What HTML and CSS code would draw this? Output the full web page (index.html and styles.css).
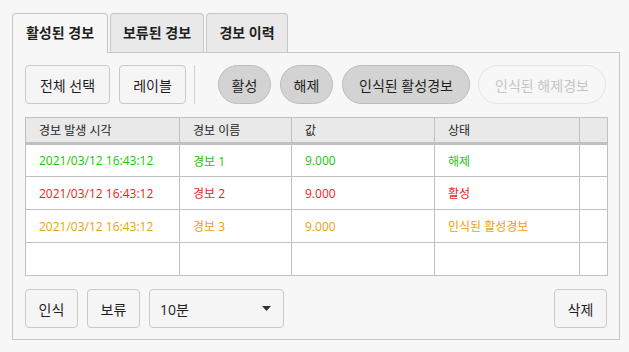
FILE: index.html
```html
<!DOCTYPE html>
<html lang="ko">
  <head>
    <meta charset="UTF-8" />
    <meta name="viewport" content="width=device-width, initial-scale=1.0" />
    <title>경보</title>
    <link rel="stylesheet" href="styles.css">
  </head>
  <body>
    <div class="tabs">
      <div class="tab tab-active">활성된 경보</div>
      <div class="tab">보류된 경보</div>
      <div class="tab">경보 이력</div>
    </div>
    <div class="panel">
      <div class="toolbar">
        <button class="btn btn-select">전체 선택</button>
        <button class="btn btn-label">레이블</button>
        <span class="separator"></span>
        <button class="pill pill-short">활성</button>
        <button class="pill pill-short">해제</button>
        <button class="pill pill-long">인식된 활성경보</button>
        <button class="pill pill-long pill-disabled">인식된 해제경보</button>
      </div>
      <table class="alarm-table">
        <colgroup>
          <col class="col-time" />
          <col class="col-name" />
          <col class="col-value" />
          <col class="col-state" />
          <col class="col-extra" />
        </colgroup>
        <thead>
          <tr>
            <th>경보 발생 시각</th>
            <th>경보 이름</th>
            <th>값</th>
            <th>상태</th>
            <th></th>
          </tr>
        </thead>
        <tbody>
          <tr class="row-cleared">
            <td>2021/03/12 16:43:12</td>
            <td>경보 1</td>
            <td>9.000</td>
            <td>해제</td>
            <td></td>
          </tr>
          <tr class="row-active">
            <td>2021/03/12 16:43:12</td>
            <td>경보 2</td>
            <td>9.000</td>
            <td>활성</td>
            <td></td>
          </tr>
          <tr class="row-acked">
            <td>2021/03/12 16:43:12</td>
            <td>경보 3</td>
            <td>9.000</td>
            <td>인식된 활성경보</td>
            <td></td>
          </tr>
          <tr>
            <td></td>
            <td></td>
            <td></td>
            <td></td>
            <td></td>
          </tr>
        </tbody>
      </table>
      <div class="footer">
        <button class="btn btn-small">인식</button>
        <button class="btn btn-small">보류</button>
        <div class="select">
          <span>10분</span>
          <svg width="9" height="5" viewBox="0 0 9 5"><path d="M0 0h9L4.5 5z" fill="#333"/></svg>
        </div>
        <span class="spacer"></span>
        <button class="btn btn-small">삭제</button>
      </div>
    </div>
  </body>
</html>
```

FILE: styles.css
```css
* {
  box-sizing: border-box;
}

body {
  margin: 0;
  padding: 13px 0 0 12px;
  background-color: #f7f7f7;
  font-family: "Open Sans", "Noto Sans CJK KR", sans-serif;
  color: #1e1e1e;
}

/*TABS*/
.tabs {
  display: flex;
  gap: 2px;
}

.tab {
  height: 39px;
  line-height: 37px;
  padding: 0;
  text-align: center;
  white-space: nowrap;
  border: 1px solid #c6c6c6;
  border-bottom: none;
  border-radius: 4px 4px 0 0;
  background-color: #e9e9e9;
  font-size: 14px;
  font-weight: bold;
  color: #1e1e1e;
}

.tab-active {
  width: 96px;
  background-color: #f7f7f7;
  height: 40px;
  margin-bottom: -1px;
  position: relative;
  z-index: 1;
}

.tab:nth-child(2) {
  width: 94px;
}

.tab:nth-child(3) {
  width: 82px;
}

/*PANEL*/
.panel {
  width: 608px;
  height: 288px;
  border: 1px solid #c6c6c6;
  padding: 12px;
  display: flex;
  flex-direction: column;
}

.toolbar {
  display: flex;
  align-items: center;
  height: 39px;
}

button {
  font-family: "Open Sans", "Noto Sans CJK KR", sans-serif;
  font-size: 14px;
  color: #1e1e1e;
  padding: 0;
  flex-shrink: 0;
  white-space: nowrap;
  cursor: pointer;
}

.btn {
  height: 39px;
  border: 1px solid #c9c9c9;
  border-radius: 4px;
  background-color: #f5f5f5;
}

.btn-select {
  width: 85px;
}

.btn-label {
  width: 67px;
  margin-left: 9px;
}

.separator {
  flex-shrink: 0;
  width: 1px;
  height: 39px;
  background-color: #cfcfcf;
  margin: 0 23px 0 8px;
}

.pill {
  height: 39px;
  border: 1px solid #bcbcbc;
  border-radius: 20px;
  background-color: #d3d3d3;
  margin-right: 9px;
}

.pill-short {
  width: 53px;
}

.pill-long {
  width: 128px;
  margin-right: 8px;
}

.pill-disabled {
  margin-right: 0;
  background-color: transparent;
  border-color: #e4e4e4;
  color: #c6c6c6;
  cursor: default;
}

/*TABLE*/
.alarm-table {
  margin-top: 13px;
  width: 582px;
  border-collapse: collapse;
  table-layout: fixed;
  font-size: 12px;
}

.col-time { width: 154px; }
.col-name { width: 112px; }
.col-value { width: 143px; }
.col-state { width: 145px; }
.col-extra { width: 28px; }

.alarm-table th,
.alarm-table td {
  border: 1px solid #c0c0c0;
  padding: 0 0 0 13px;
  text-align: left;
  white-space: nowrap;
}

.alarm-table th {
  height: 26px;
  background-color: #e9e9e9;
  font-weight: normal;
  color: #1e1e1e;
  border-bottom: 3px solid #c0c0c0;
}

.alarm-table td {
  height: 33px;
  background-color: #fff;
}

.row-cleared td {
  color: #22c40a;
}

.row-active td {
  color: #ee1c1c;
}

.row-acked td {
  color: #eea10a;
}

/*FOOTER*/
.footer {
  margin-top: 13px;
  display: flex;
  align-items: center;
  gap: 9px;
}

.btn-small {
  width: 53px;
}

.select {
  width: 135px;
  height: 39px;
  border: 1px solid #c9c9c9;
  border-radius: 4px;
  background-color: #f5f5f5;
  display: flex;
  align-items: center;
  justify-content: space-between;
  padding: 0 12px 0 10px;
  font-size: 14px;
}

.spacer {
  flex: 1;
}
```
